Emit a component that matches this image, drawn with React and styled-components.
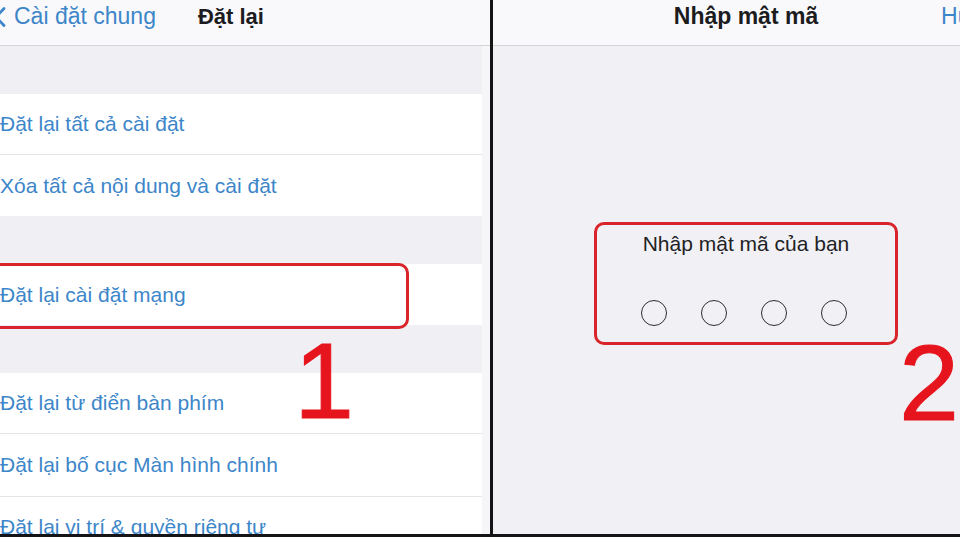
import React from "react";
import styled, { createGlobalStyle } from "styled-components";

const GlobalStyle = createGlobalStyle`
  html, body { margin: 0; padding: 0; background: #ffffff; }
  body { width: 960px; height: 540px; overflow: hidden; font-family: "Liberation Sans", Arial, sans-serif; }
`;

const Frame = styled.div`
  position: relative;
  width: 960px;
  height: 534px;
  display: grid;
  grid-template-columns: 490px 3px 1fr;
  border-bottom: 3px solid #141416;
  overflow: hidden;
`;

const Divider = styled.div`
  background: #141416;
`;

const Panel = styled.section`
  display: flex;
  flex-direction: column;
  min-width: 0;
  overflow: hidden;
  background: ${(p) => p.$bg};
`;

const NavBar = styled.header`
  flex: 0 0 46px;
  display: flex;
  align-items: center;
  padding-bottom: 12px;
  box-sizing: border-box;
  background: #f9f9fb;
  border-bottom: 1px solid #d4d4d9;
  font-size: 23px;
  white-space: nowrap;
`;

const BackLink = styled.span`
  display: flex;
  align-items: center;
  gap: 8px;
  margin-left: -6px;
  color: #3d86c9;
`;

const NavTitle = styled.span`
  font-weight: 700;
  font-size: ${(p) => p.$size || 22}px;
  color: #1c1c1e;
  margin-left: ${(p) => p.$offset || 0}px;
`;

const List = styled.div`
  display: flex;
  flex-direction: column;
  margin-right: 8px;
  background: #efeff4;
`;

const GroupGap = styled.div`
  height: ${(p) => p.$h}px;
`;

const Group = styled.div`
  display: flex;
  flex-direction: column;
  background: #ffffff;
`;

const Row = styled.div`
  height: ${(p) => p.$h || 60}px;
  flex: 0 0 auto;
  display: flex;
  align-items: center;
  font-size: 21px;
  color: #3d86c9;
  white-space: nowrap;
  & + & {
    border-top: 1px solid #e3e3e8;
  }
`;

const RightInner = styled.div`
  width: 506px;
  flex: 1;
  display: flex;
  flex-direction: column;
`;

const RightNav = styled(NavBar)`
  justify-content: center;
  position: relative;
`;

const CancelText = styled.span`
  position: absolute;
  right: 17px;
  color: #3d86c9;
`;

const Prompt = styled.div`
  display: flex;
  flex-direction: column;
  align-items: center;
  padding-top: 186px;
  gap: 44px;
`;

const PromptText = styled.div`
  font-size: 21px;
  line-height: 24px;
  color: #222224;
`;

const Dots = styled.div`
  display: flex;
  gap: 34px;
  margin-left: -4px;
`;

const Dot = styled.span`
  width: 26px;
  height: 26px;
  box-sizing: border-box;
  border: 1.6px solid #2e2e30;
  border-radius: 50%;
`;

/* red callouts drawn over the screens */
const Callout = styled.div`
  position: absolute;
  box-sizing: border-box;
  border: 3px solid #d8242b;
  border-radius: 10px;
  pointer-events: none;
`;

const StepNumber = styled.div`
  position: absolute;
  font-family: "Liberation Sans", Arial, sans-serif;
  font-size: 108px;
  line-height: 1;
  color: #e6141c;
  -webkit-text-stroke: 1px #e6141c;
  pointer-events: none;
`;

const Chevron = () => (
  <svg width="12" height="20" viewBox="0 0 12 20" aria-hidden="true">
    <path d="M10 1.5 L2 10 L10 18.5" fill="none" stroke="#3d86c9" strokeWidth="2.8" strokeLinecap="round" strokeLinejoin="round" />
  </svg>
);

export default function App() {
  return (
    <>
      <GlobalStyle />
      <Frame>
        <Panel $bg="#f6f6f8">
          <NavBar>
            <BackLink>
              <Chevron />
              Cài đặt chung
            </BackLink>
            <NavTitle $offset={42}>Đặt lại</NavTitle>
          </NavBar>
          <List>
            <GroupGap $h={48} />
            <Group>
              <Row $h={60}>Đặt lại tất cả cài đặt</Row>
              <Row $h={61}>Xóa tất cả nội dung và cài đặt</Row>
            </Group>
            <GroupGap $h={48} />
            <Group>
              <Row $h={61}>Đặt lại cài đặt mạng</Row>
            </Group>
            <GroupGap $h={48} />
            <Group>
              <Row $h={60}>Đặt lại từ điển bàn phím</Row>
              <Row $h={62}>Đặt lại bố cục Màn hình chính</Row>
              <Row $h={60}>Đặt lại vị trí &amp; quyền riêng tư</Row>
            </Group>
          </List>
        </Panel>
        <Divider />
        <Panel $bg="#f1f0f5">
          <RightInner>
            <RightNav>
              <NavTitle $size={23}>Nhập mật mã</NavTitle>
              <CancelText>Hủy</CancelText>
            </RightNav>
            <Prompt>
              <PromptText>Nhập mật mã của bạn</PromptText>
              <Dots>
                <Dot />
                <Dot />
                <Dot />
                <Dot />
              </Dots>
            </Prompt>
          </RightInner>
        </Panel>
        <Callout style={{ left: -12, top: 263, width: 421, height: 66 }} />
        <Callout style={{ left: 594, top: 222, width: 304, height: 123 }} />
        <StepNumber style={{ left: 294, top: 327 }}>1</StepNumber>
        <StepNumber style={{ left: 899, top: 329 }}>2</StepNumber>
      </Frame>
    </>
  );
}
